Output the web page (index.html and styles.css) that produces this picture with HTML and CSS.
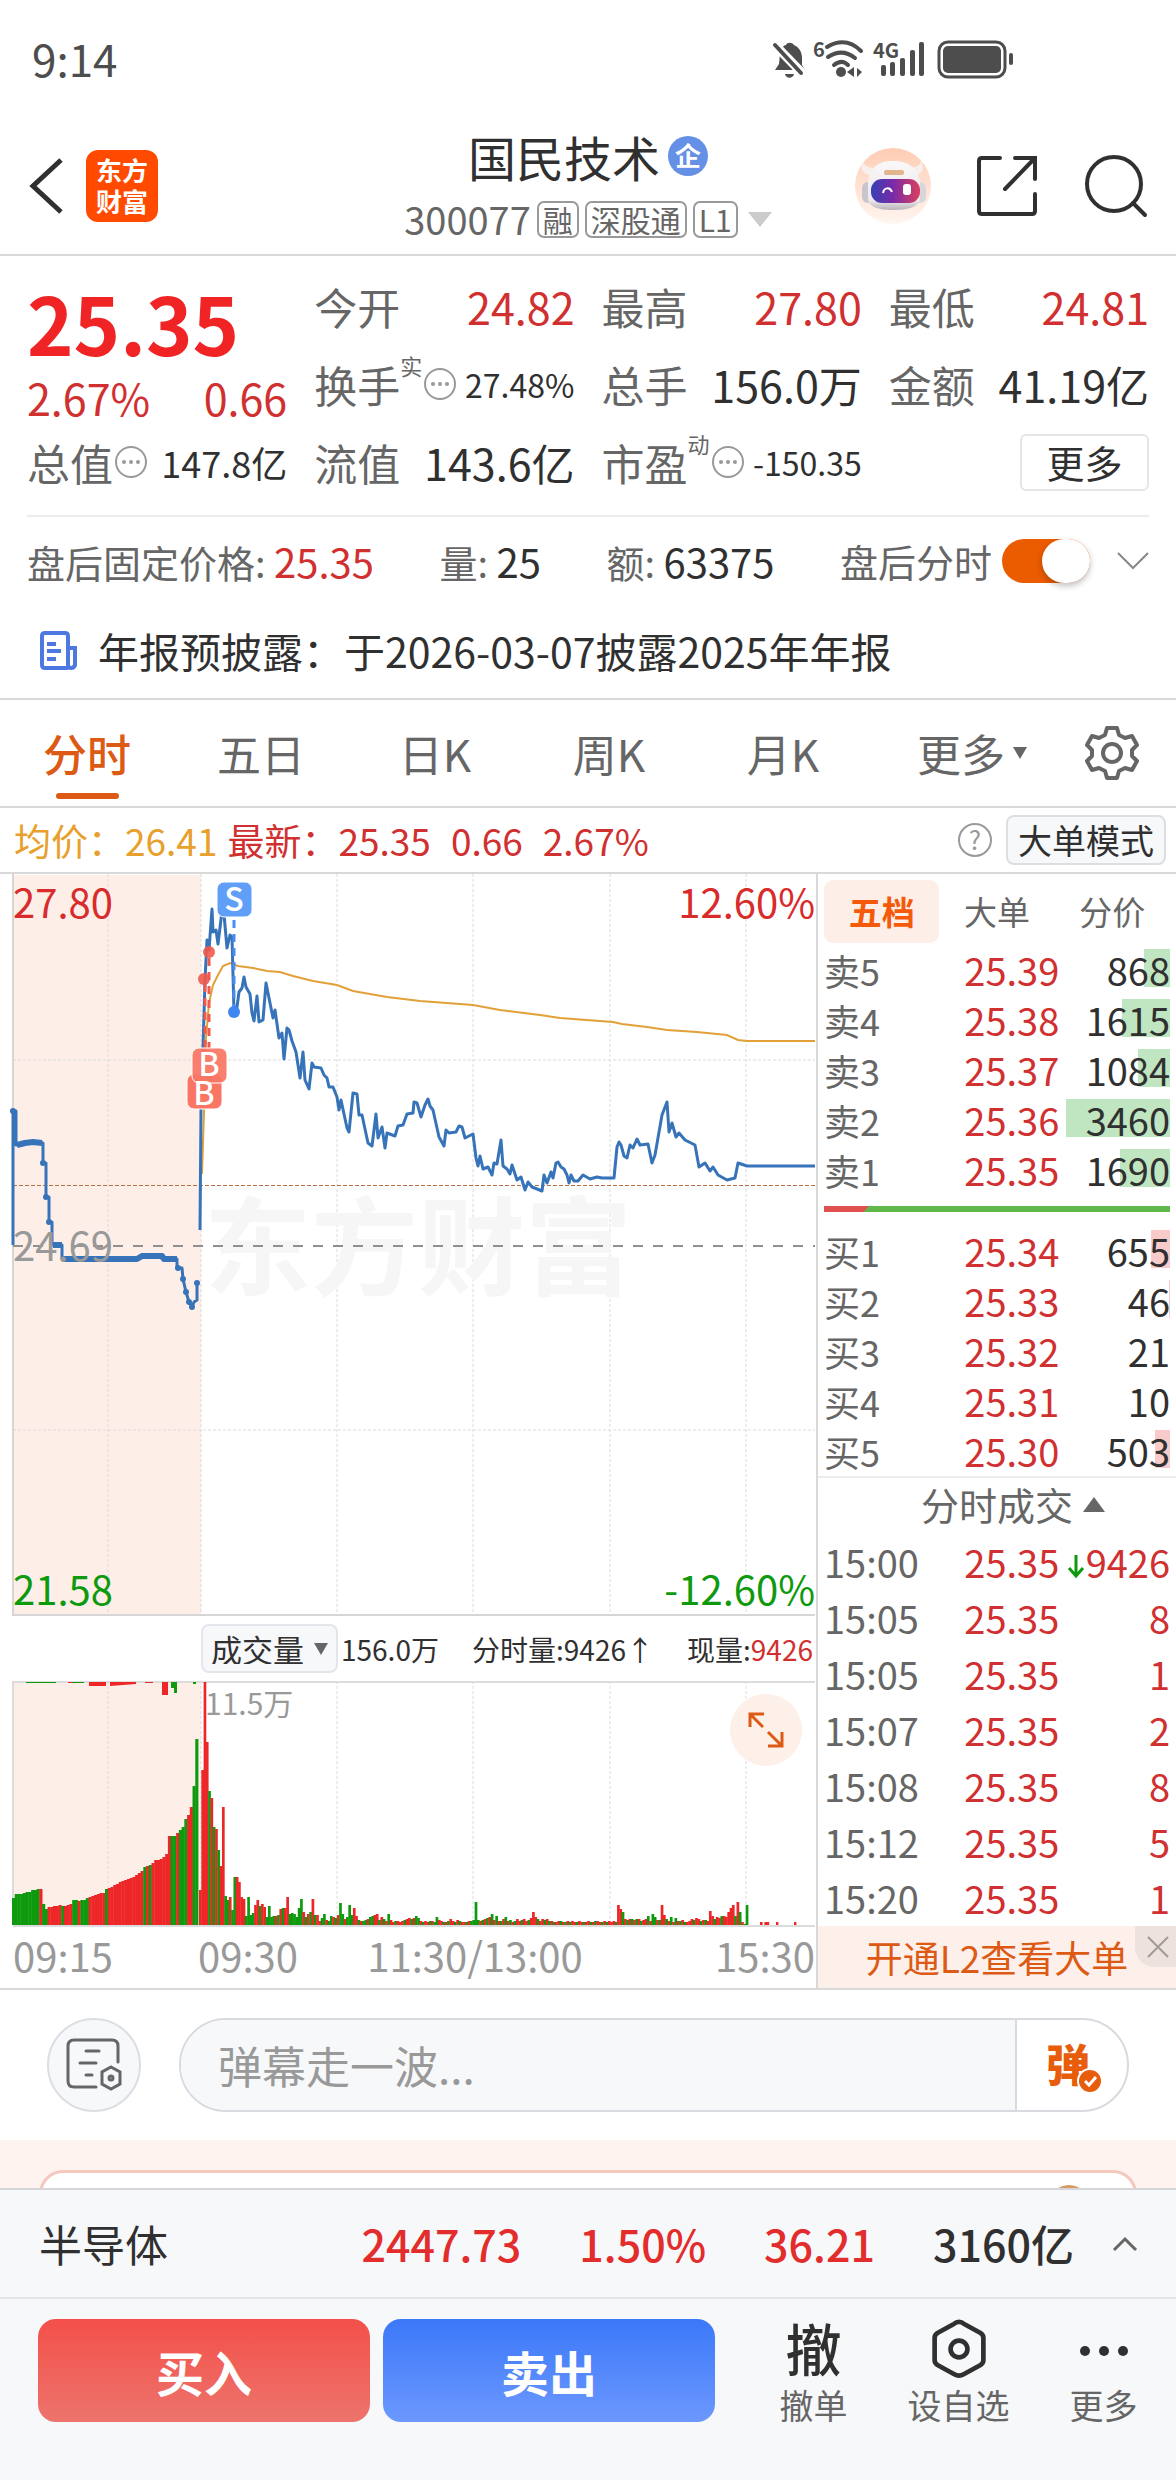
FILE: index.html
```html
<!DOCTYPE html>
<html lang="zh-CN">
<head>
<meta charset="utf-8">
<meta name="viewport" content="width=device-width, initial-scale=1">
<title>国民技术 300077</title>
<link rel="stylesheet" href="styles.css">
</head>
<body>

<div class="statusbar">
	<span class="clock">9:14</span>
	<svg class="status-icons" viewBox="0 -10 246 60" width="246" height="60" aria-hidden="true">
		<g fill="#4d4d4d">
			<path d="M8 13C9 8 12 5 14 5c1-3 6-3 8 0 5 2 8 7 8 13v7l3 5H3l4-6z"/>
			<path d="M13 34h9c-1 5-8 5-9 0z"/>
			<path d="M0 2L32 35" stroke="#fff" stroke-width="9"/>
			<path d="M3 5L29 33" stroke="#4d4d4d" stroke-width="4" stroke-linecap="round"/>
			<text class="tiny" x="41" y="17">6</text>
			<circle cx="69" cy="32" r="5"/>
			<path d="M82 27v10l-7-5zM83 27v10M84 28v9M85 28l5 4-5 5z"/>
			<text class="tiny" x="101" y="18">4G</text>
			<rect x="109" y="25" width="5" height="11" rx="2"/>
			<rect x="118" y="22" width="5" height="14" rx="2"/>
			<rect x="128" y="18" width="5" height="18" rx="2"/>
			<rect x="138" y="10" width="5" height="26" rx="2"/>
			<rect x="147" y="2" width="5" height="34" rx="2"/>
			<rect x="171" y="6" width="58" height="27" rx="5"/>
			<rect x="237" y="13" width="4" height="12" rx="2"/>
		</g>
		<g fill="none" stroke="#4d4d4d" stroke-linecap="round">
			<path stroke-width="4" d="M55 7c12-7 24-6 34 4M56 17c9-6 18-6 27 1M62 25c5-4 10-4 14 0"/>
			<rect stroke-width="3" x="167" y="2" width="66" height="35" rx="9"/>
		</g>
	</svg>
</div>

<header class="header">
	<div class="header-left">
		<button class="icon-btn" aria-label="返回">
			<svg viewBox="0 0 36 60" width="36" height="60"><path d="M33 4L5 30l28 26" fill="none" stroke="#303030" stroke-width="5"/></svg>
		</button>
		<span class="logo">东方<br>财富</span>
	</div>
	<div class="header-title">
		<h1>国民技术<span class="badge">企</span></h1>
		<div class="code">300077 <span class="tag">融</span><span class="tag">深股通</span><span class="tag">L1</span><i class="tri-down big"></i></div>
	</div>
	<div class="header-right">
		<button class="icon-btn" aria-label="助手">
			<svg viewBox="0 0 78 78" width="78" height="78">
				<defs>
					<linearGradient id="halo" x1="0" y1="0" x2="0" y2="1"><stop offset="0" stop-color="#ffccb3"/><stop offset="1" stop-color="#fff6f1"/></linearGradient>
					<linearGradient id="shell" x1="0" y1="0" x2="0" y2="1"><stop offset="0" stop-color="#fbf8f8"/><stop offset=".8" stop-color="#ece8ec"/><stop offset="1" stop-color="#b9b3ba"/></linearGradient>
					<linearGradient id="visor"><stop offset="0" stop-color="#3540b4"/><stop offset=".45" stop-color="#7a2aa8"/><stop offset="1" stop-color="#dc3f5c"/></linearGradient>
				</defs>
				<circle cx="39" cy="39" r="38" fill="url(#halo)"/>
				<path d="M15 28c-8-2-9-8-6-14 1 4 4 6 10 7zM62 28c8-2 8-8 5-14-1 4-4 6-9 7z" fill="#f7eeee"/>
				<rect x="8" y="35" width="12" height="21" rx="6" fill="#c9c5ce"/>
				<rect x="60" y="35" width="12" height="21" rx="6" fill="#d9d5dc"/>
				<path d="M14 38c0-17 10-24 25-24s27 7 27 24v13c0 9-12 12-27 12S14 60 14 51z" fill="url(#shell)"/>
				<rect x="30" y="23" width="20" height="5" rx="2" fill="#e3b58d"/>
				<rect x="17" y="32" width="49" height="24" rx="11" fill="url(#visor)"/>
				<path d="M29 46c1-6 7-6 9-1" fill="none" stroke="#fff" stroke-width="2"/>
				<rect x="49" y="37" width="8" height="11" rx="3" fill="#fff"/>
			</svg>
		</button>
		<button class="icon-btn" aria-label="分享">
			<svg viewBox="0 0 62 62" width="62" height="62"><path d="M24 3H6q-3 0-3 3v50q0 3 3 3h50q3 0 3-3V39M39 3h20v21M58 4L29 34" fill="none" stroke="#303030" stroke-width="4" stroke-linecap="round"/></svg>
		</button>
		<button class="icon-btn" aria-label="搜索">
			<svg viewBox="0 0 64 64" width="64" height="64"><circle cx="30" cy="30" r="27" fill="none" stroke="#303030" stroke-width="4"/><path d="M49 49l12 12" stroke="#303030" stroke-width="4" stroke-linecap="round"/></svg>
		</button>
	</div>
</header>

<section class="quote">
	<div class="stats">
		<div class="price-box">
			<div class="price">25.35</div>
			<div class="change"><span>2.67%</span><span>0.66</span></div>
		</div>
		<div class="stat"><span>今开</span><b class="up">24.82</b></div>
		<div class="stat"><span>最高</span><b class="up">27.80</b></div>
		<div class="stat"><span>最低</span><b class="up">24.81</b></div>
		<div class="stat"><span>换手</span><sup>实</sup><i class="dots"></i><b class="sm">27.48%</b></div>
		<div class="stat"><span>总手</span><b>156.0万</b></div>
		<div class="stat"><span>金额</span><b>41.19亿</b></div>
		<div class="stat"><span>总值</span><i class="dots"></i><b class="md">147.8亿</b></div>
		<div class="stat"><span>流值</span><b>143.6亿</b></div>
		<div class="stat"><span>市盈</span><sup>动</sup><i class="dots"></i><b class="sm">-150.35</b></div>
		<div class="stat end"><button class="more">更多</button></div>
	</div>
	<div class="after">
		<span>盘后固定价格: <b class="up">25.35</b></span>
		<span>量: <b>25</b></span>
		<span>额: <b>63375</b></span>
		<div class="after-right">
			<label class="switch">盘后分时<input type="checkbox" checked></label>
			<svg viewBox="0 0 32 20" width="32" height="20"><path d="M1 2l15 15L31 2" fill="none" stroke="#888" stroke-width="2"/></svg>
		</div>
	</div>
	<a class="notice" href="#">
		<svg viewBox="0 0 38 40" width="38" height="40"><g fill="none" stroke="#4d78e0" stroke-width="4"><path d="M29 37H6q-3 0-3-3V5q0-3 3-3h20q3 0 3 3v29q0 3 3 3t4-3V17h-7M8 13h9M8 20h14M8 28h9"/></g></svg>
		年报预披露：于2026-03-07披露2025年年报
	</a>
</section>

<nav class="tabs">
	<button class="tab active">分时</button>
	<button class="tab">五日</button>
	<button class="tab">日K</button>
	<button class="tab">周K</button>
	<button class="tab">月K</button>
	<button class="tab">更多<i class="tri-down"></i></button>
	<button class="tab" aria-label="设置">
		<svg viewBox="0 0 54 56" width="54" height="56"><g fill="none" stroke="#666" stroke-width="4" stroke-linejoin="round"><path d="M22 3h10l2 7 6 3 7-2 5 9-5 5v6l5 5-5 9-7-2-6 3-2 7H22l-2-7-6-3-7 2-5-9 5-5v-6l-5-5 5-9 7 2 6-3z"/><circle cx="27" cy="28" r="9"/></g></svg>
	</button>
</nav>

<div class="avgbar">
	<span class="avg">均价：26.41</span>
	<span class="up">最新：25.35</span>
	<span class="up">0.66</span>
	<span class="up">2.67%</span>
	<span class="help">?</span>
	<button class="mode">大单模式</button>
</div>

<main class="market">
	<section class="charts">
		<svg class="chart" viewBox="0 0 816 742">
			<rect x="13" y="1" width="188" height="740" fill="#fdeee8"/>
			<g class="grid"><path d="M108 0V741M201 0V741M337 0V741M473 0V741M610 0V741M746 0V741M13 186H815M13 556H815"/></g>
			<path d="M13 0V741H815" fill="none" stroke="#d6d6d6" stroke-width="2"/>
			<text class="watermark" x="204" y="413">东方财富</text>
			<path d="M13 372H815" stroke="#909090" stroke-width="2" stroke-dasharray="10 10"/>
			<path class="ref-line" d="M13 311H815"/>
			<path class="avg-line" d="M202 300L204 238 206 163 209 129 213 111 218 101 223 92 230 89 238 92 253 94 267 97 280 98 293 102 313 107 337 111 353 117 387 123 420 127 473 131 500 136 540 141 560 144 613 148 622 150 647 153 667 156 697 158 727 161 738 166 747 167H815"/>
			<path class="price-line" d="M13 371V237H16V271H20L25 269 33 268 43 269V289H46V323H49V348H52V371H62V385H137L142 381 162 382 163 385H177V394H182L183 405 186 418 189 428 192 433 194 428 197 426V409"/>
			<path class="price-line thick" d="M17 271L25 269 33 268 42 269M53 371H62M63 385H137L142 382H162L164 385H177"/>
			<g fill="#3673b9"><circle cx="13" cy="237" r="3"/><circle cx="43" cy="289" r="3"/><circle cx="46" cy="323" r="3"/><circle cx="49" cy="348" r="3"/><circle cx="178" cy="394" r="3"/><circle cx="183" cy="405" r="3"/><circle cx="186" cy="418" r="3"/><circle cx="189" cy="428" r="3"/><circle cx="192" cy="433" r="3"/><circle cx="197" cy="409" r="3"/></g>
			<path class="price-line" d="M200 356L201 236 203 173 205 106 207 66 209 76 212 35 213 58 216 56 218 70 223 29 227 74 230 61 232 63 234 138 237 133 239 118 242 114 244 103 246 113 250 120 252 139 254 147 257 122 259 148 263 146 266 109 270 129 273 144 275 136 279 164 282 159 284 185 287 154 289 156 292 167 296 178 300 204 303 178 305 206 309 215 312 189 314 193 321 194 324 201 327 204 329 213 333 213 337 223 339 236 341 226 347 254 349 258 353 219 357 220 359 241 362 241 368 269 372 272 376 240 378 264 382 253 385 274 387 259 395 262 398 252 403 251 407 240 413 239 414 228 417 229 421 243 425 231 428 225 430 232 433 236 439 263 444 272 446 256 449 259 456 258 459 252 462 253 465 264 473 260 476 284 478 292 480 282 483 295 488 293 492 301 494 289 497 290 501 266 503 292 507 295 510 300 512 291 517 306 521 303 525 316 528 308 532 313 542 317 544 301 547 309 551 298 553 304 556 289 558 288 561 293 564 295 567 301 569 309 571 301 574 307 578 307 583 301 590 305 597 303 602 304 614 304 617 273 619 268 621 271 624 282 627 284 630 271 633 274 637 265 640 271 648 270 652 289 655 281 662 241 667 228 669 258 672 249 676 263 679 259 685 266 695 271 699 293 705 289 710 297 713 293 718 301 727 306 735 304 738 289 747 292H815"/>
			<g fill="none" stroke-width="3" stroke-dasharray="8 6"><path d="M209 84V174M205 110V174" stroke="#f0594c"/><path d="M234 46V138" stroke="#4a8df0"/></g>
			<g fill="#f0594c" fill-opacity=".9"><circle cx="209" cy="78" r="6"/><circle cx="204" cy="105" r="6"/></g>
			<circle cx="234" cy="138" r="6" fill="#3f86f0"/>
			<g stroke="#fff" stroke-width="1">
				<rect x="187" y="200" width="35" height="35" rx="7" fill="#f97564"/>
				<rect x="192" y="174" width="35" height="35" rx="7" fill="#f97564" fill-opacity=".93"/>
				<rect x="217" y="8" width="35" height="35" rx="7" fill="#5f9ff8"/>
			</g>
			<g class="mark"><text x="204" y="231">B</text><text x="209" y="202">B</text><text x="234" y="37">S</text></g>
			<text class="t red" x="13" y="44">27.80</text>
			<text class="t red end" x="815" y="44">12.60%</text>
			<text class="t gray" x="13" y="387">24.69</text>
			<text class="t green" x="13" y="731">21.58</text>
			<text class="t green end" x="815" y="731">-12.60%</text>
		</svg>
		<div class="volbar">
			<span class="pick"><select aria-label="指标"><option>成交量</option></select><i class="tri-down"></i></span>
			<span>156.0万</span>
			<span class="gap">分时量:9426↑</span>
			<span class="gap">现量:<b class="up">9426</b></span>
		</div>
		<svg class="chart" viewBox="0 0 816 307">
			<rect x="13" y="1" width="188" height="243" fill="#fdeee8"/>
			<g class="grid"><path d="M108 0V244M201 0V244M337 0V244M473 0V244M610 0V244M746 0V244"/></g>
			<path d="M13 244V1H815M13 245H815" fill="none" stroke="#dcdcdc" stroke-width="2"/>
			<g id="bars"></g>
			<path d="M50 1h5v1h-5zM68 1h6v1h-6zM89 1h17v4h-17zM110 1h26v2l-26 2zM162 1h6v13h-6zM145 1h8v1h-8z" fill="#ed2728"/>
			<path d="M26 1h30v1H26zM171 1h6v11h-3V7h-3zM193 1h3v2h-3zM72 1h12v1H72z" fill="#0e9a0e"/>
			<text class="t small" x="205" y="34">11.5万</text>
			<circle cx="766" cy="49" r="36" fill="#fdf0e8"/>
			<path d="M763 46L750 33M750 46V33H764M768 51l14 14M782 51V65H768" fill="none" stroke="#dc5a14" stroke-width="3"/>
			<text class="t gray" x="13" y="291">09:15</text>
			<text class="t gray" x="198" y="291">09:30</text>
			<text class="t gray mid" x="475" y="291">11:30/13:00</text>
			<text class="t gray end" x="815" y="291">15:30</text>
		</svg>
	</section>

	<aside class="book">
		<div class="book-tabs">
			<button class="active">五档</button><button>大单</button><button>分价</button>
		</div>
		<table class="levels sell">
			<tr><th>卖5</th><td>25.39</td><td><i style="width:26px"></i><b>868</b></td></tr>
			<tr><th>卖4</th><td>25.38</td><td><i style="width:48px"></i><b>1615</b></td></tr>
			<tr><th>卖3</th><td>25.37</td><td><i style="width:32px"></i><b>1084</b></td></tr>
			<tr><th>卖2</th><td>25.36</td><td><i style="width:104px"></i><b>3460</b></td></tr>
			<tr><th>卖1</th><td>25.35</td><td><i style="width:50px"></i><b>1690</b></td></tr>
		</table>
		<div class="ratio"><i style="width:13%"></i></div>
		<table class="levels buy">
			<tr><th>买1</th><td>25.34</td><td><i style="width:19px"></i><b>655</b></td></tr>
			<tr><th>买2</th><td>25.33</td><td><i style="width:1px"></i><b>46</b></td></tr>
			<tr><th>买3</th><td>25.32</td><td><b>21</b></td></tr>
			<tr><th>买4</th><td>25.31</td><td><b>10</b></td></tr>
			<tr><th>买5</th><td>25.30</td><td><i style="width:15px"></i><b>503</b></td></tr>
		</table>
		<button class="deals-title">分时成交<i class="tri-up"></i></button>
		<table class="deals">
			<tr><th>15:00</th><td>25.35</td><td><svg viewBox="0 0 16 24" width="16" height="24"><path d="M8 1v20M1 14l7 8 7-8" fill="none" stroke="#0e9a0e" stroke-width="3"/></svg>9426</td></tr>
			<tr><th>15:05</th><td>25.35</td><td>8</td></tr>
			<tr><th>15:05</th><td>25.35</td><td>1</td></tr>
			<tr><th>15:07</th><td>25.35</td><td>2</td></tr>
			<tr><th>15:08</th><td>25.35</td><td>8</td></tr>
			<tr><th>15:12</th><td>25.35</td><td>5</td></tr>
			<tr><th>15:20</th><td>25.35</td><td>1</td></tr>
		</table>
		<div class="promo">
			<a href="#">开通L2查看大单</a>
			<button aria-label="关闭"><svg viewBox="0 0 22 22" width="22" height="22"><path d="M1 1l20 20M21 1L1 21" stroke="#a39a96" stroke-width="2"/></svg></button>
		</div>
	</aside>
</main>

<div class="danmu">
	<button class="round" aria-label="弹幕设置">
		<svg viewBox="0 0 58 54" width="58" height="54"><g fill="none" stroke="#666" stroke-width="3" stroke-linecap="round"><path d="M31 49H9q-6 0-6-6V8q0-6 6-6h38q6 0 6 6v16"/><path d="M21 13h13M15 25h16M21 37h6"/><path d="M46 29l9 5v12l-9 5-9-5V34z"/><circle cx="46" cy="40" r="2"/></g></svg>
	</button>
	<div class="danmu-box">
		<input type="text" placeholder="弹幕走一波..." aria-label="弹幕">
		<button class="send">弹<svg viewBox="0 0 26 26" width="26" height="26"><circle cx="13" cy="13" r="12" fill="#e85d0c" stroke="#fff" stroke-width="2"/><path d="M8 13l4 4 7-8" fill="none" stroke="#fff" stroke-width="3"/></svg></button>
	</div>
</div>

<div class="feed"><div class="card"><i></i></div></div>

<footer class="footer">
	<div class="index">
		<span class="name">半导体</span>
		<b class="up">2447.73</b><b class="up">1.50%</b><b class="up">36.21</b><b>3160亿</b>
		<svg viewBox="0 0 24 14" width="24" height="14"><path d="M1 13L12 2l11 11" fill="none" stroke="#666" stroke-width="3"/></svg>
	</div>
	<div class="actions">
		<button class="trade buy-btn">买入</button>
		<button class="trade sell-btn">卖出</button>
		<button class="tool"><span class="big-char">撤</span>撤单</button>
		<button class="tool">
			<svg viewBox="0 0 60 64" width="60" height="60"><g fill="none" stroke="#303030" stroke-width="5" stroke-linejoin="round"><path d="M30 3q3 0 5 2l18 10q3 2 3 5v24q0 3-3 5L35 59q-5 3-10 0L7 49q-3-2-3-5V20q0-3 3-5L25 5q2-2 5-2z"/><circle cx="30" cy="32" r="9"/></g></svg>设自选
		</button>
		<button class="tool">
			<svg viewBox="0 0 60 60" width="60" height="60"><g fill="#303030"><circle cx="11" cy="32" r="5"/><circle cx="30" cy="32" r="5"/><circle cx="49" cy="32" r="5"/></g></svg>更多
		</button>
	</div>
</footer>

<script src="chart.js"></script>
</body>
</html>
```
FILE: styles.css
```css
* {
	box-sizing: border-box;
}
body {
	margin: 0;
	background: #fff;
	color: #303030;
	font-family: "Noto Sans CJK SC", "Noto Sans", sans-serif;
	font-size: 44px;
	line-height: 1;
}
button, input, select {
	font-family: inherit;
	font-size: inherit;
	line-height: inherit;
	color: inherit;
	background: none;
	border: 0;
	padding: 0;
	margin: 0;
}
svg {
	display: block;
	flex: none;
	overflow: visible;
}
b, i {
	font-weight: normal;
	font-style: normal;
}
a {
	color: inherit;
	text-decoration: none;
}
.up {
	color: #d13030;
}

/* status bar + header */
.statusbar {
	display: flex;
	justify-content: space-between;
	align-items: center;
	height: 120px;
	padding: 0 158px 4px 32px;
	color: #4d4d4d;
}
.status-icons {
	margin-top: 4px;
}
.tiny {
	font: 700 20px "Noto Sans CJK SC", sans-serif;
}
.header {
	display: grid;
	grid-template-columns: 1fr auto 1fr;
	align-items: center;
	height: 136px;
	border-bottom: 2px solid #d9d9d9;
}
.header-left, .header-right {
	display: flex;
	align-items: center;
	padding-bottom: 2px;
}
.header-left {
	gap: 22px;
	padding-left: 28px;
}
.header-right {
	justify-content: flex-end;
	gap: 44px;
	padding-right: 28px;
}
.header-right .icon-btn + .icon-btn + .icon-btn {
	margin-left: 2px;
}
.logo {
	width: 72px;
	height: 72px;
	padding: 4px 0;
	border-radius: 12px;
	background: #ff4a00;
	color: #fff;
	font-size: 26px;
	font-weight: 700;
	line-height: 31px;
	text-align: center;
}
.header-title h1 {
	display: flex;
	justify-content: center;
	align-items: center;
	gap: 8px;
	margin: 0;
	padding-bottom: 6px;
	font-size: 48px;
	font-weight: 400;
	line-height: 58px;
}
.badge {
	width: 40px;
	height: 40px;
	border-radius: 50%;
	background: #6490e6;
	color: #fff;
	font-size: 26px;
	font-weight: 700;
	line-height: 38px;
	text-align: center;
}
.code {
	display: flex;
	align-items: center;
	gap: 6px;
	height: 56px;
	color: #666;
	font-size: 38px;
}
.tag {
	padding: 0 4px;
	border: 2px solid #999;
	border-radius: 7px;
	font-size: 30px;
	line-height: 33px;
}
.tri-down, .tri-up {
	display: inline-block;
	border: 7px solid transparent;
	border-top: 12px solid #666;
	border-bottom: 0;
}
.tri-down.big {
	margin-left: 4px;
	border-width: 15px 12px 0;
	border-top-color: #ccc;
}
.tri-up {
	border-width: 0 11px 15px;
	border-bottom: 15px solid #666;
}

/* quote */
.quote {
	padding: 11px 27px 0;
	border-bottom: 2px solid #d9d9d9;
}
.stats {
	display: grid;
	grid-template-columns: repeat(4, 1fr);
	grid-auto-rows: 78px;
	column-gap: 27px;
	padding-bottom: 14px;
	border-bottom: 2px solid #ececec;
}
.price-box {
	grid-row: span 2;
	color: #d13030;
}
.price {
	padding-top: 10px;
	color: #f02424;
	font-size: 79px;
	font-weight: 700;
	line-height: 90px;
}
.change {
	display: flex;
	justify-content: space-between;
	font-size: 43px;
	line-height: 60px;
}
.stat {
	display: flex;
	align-items: center;
	color: #666;
	font-size: 43px;
	white-space: nowrap;
}
.stat b {
	margin-left: auto;
	color: #303030;
}
.stat b.up {
	color: #d13030;
}
.stat .sm {
	font-size: 32px;
}
.stat .md {
	font-size: 36px;
}
.stat sup {
	align-self: flex-start;
	margin-top: 8px;
	font-size: 22px;
	line-height: 24px;
}
.dots {
	position: relative;
	width: 32px;
	height: 32px;
	margin-left: 2px;
	border: 2px solid #999;
	border-radius: 50%;
}
.dots::after {
	content: "";
	position: absolute;
	left: 12px;
	top: 12px;
	width: 4px;
	height: 4px;
	border-radius: 50%;
	background: #999;
	box-shadow: -7px 0 #999, 7px 0 #999;
}
.stat.end {
	justify-content: flex-end;
}
.more {
	width: 129px;
	height: 57px;
	border: 2px solid #e6e6e6;
	border-radius: 6px;
	color: #303030;
	font-size: 38px;
}
.after {
	display: flex;
	align-items: center;
	justify-content: space-between;
	height: 88px;
	color: #666;
	font-size: 38px;
}
.after b {
	color: #303030;
	font-size: 40px;
}
.after .up {
	color: #d13030;
}
.after-right {
	display: flex;
	align-items: center;
	gap: 27px;
}
.switch {
	display: flex;
	align-items: center;
	gap: 10px;
}
.switch input {
	appearance: none;
	width: 88px;
	height: 44px;
	border-radius: 22px;
	background: #eb5b00;
}
.switch input::after {
	content: "";
	display: block;
	width: 48px;
	height: 44px;
	margin-left: auto;
	border-radius: 22px;
	background: #fff;
	box-shadow: 0 3px 6px rgba(0, 0, 0, .25);
}
.notice {
	display: flex;
	align-items: center;
	gap: 21px;
	height: 93px;
	padding: 0 0 2px 12px;
	font-size: 41px;
}

/* period tabs */
.tabs {
	display: grid;
	grid-template-columns: repeat(5, 174fr) 204fr 76fr;
	height: 108px;
	padding-right: 26px;
	border-bottom: 2px solid #d9d9d9;
	color: #666;
}
.tab {
	position: relative;
	display: flex;
	align-items: center;
	justify-content: center;
	gap: 8px;
}
.tab.active {
	color: #dc5a14;
	font-weight: 500;
}
.tab.active::after {
	content: "";
	position: absolute;
	bottom: 7px;
	width: 63px;
	height: 6px;
	border-radius: 3px;
	background: #dc5a14;
}
.avgbar {
	display: flex;
	align-items: center;
	gap: 20px;
	height: 66px;
	padding: 0 10px 0 14px;
	border-bottom: 2px solid #d9d9d9;
	font-size: 37px;
}
.avg {
	margin-right: -10px;
	color: #e8a02c;
}
.help {
	width: 34px;
	height: 34px;
	margin-left: auto;
	margin-right: -6px;
	border: 2px solid #999;
	border-radius: 50%;
	color: #999;
	font-size: 26px;
	line-height: 28px;
	text-align: center;
}
.mode {
	height: 50px;
	padding: 0 10px;
	border: 2px solid #dcdee4;
	border-radius: 8px;
	background: #f7f8fa;
	font-size: 34px;
}

/* charts */
.market {
	display: grid;
	grid-template-columns: 818fr 358fr;
	border-bottom: 2px solid #d9d9d9;
}
.charts {
	border-right: 2px solid #d9d9d9;
}
.chart {
	width: 100%;
}
.grid path {
	stroke: #dcdcdc;
	stroke-width: 1;
	stroke-dasharray: 3 2;
}
.ref-line {
	stroke: #b5714a;
	stroke-width: 1;
	stroke-dasharray: 4 2;
	shape-rendering: crispEdges;
}
.price-line {
	fill: none;
	stroke: #3673b9;
	stroke-width: 3;
	stroke-linejoin: round;
}
.price-line.thick {
	stroke-width: 6;
}
.avg-line {
	fill: none;
	stroke: #e2a138;
	stroke-width: 2;
}
.watermark {
	fill: #f6f6f6;
	font-size: 107px;
	font-weight: 700;
}
.mark text {
	fill: #fff;
	font-size: 32px;
	font-weight: 500;
	text-anchor: middle;
}
.t {
	font-size: 40px;
}
.t.red { fill: #d92b2b; }
.t.gray { fill: #999; }
.t.green { fill: #0e9a0e; }
.t.end { text-anchor: end; }
.t.mid { text-anchor: middle; }
.t.small {
	fill: #999;
	font-size: 30px;
}
.volbar {
	display: flex;
	align-items: center;
	height: 65px;
	padding: 0 3px 0 201px;
	font-size: 28px;
	white-space: nowrap;
}
.pick {
	display: flex;
	align-items: center;
	height: 49px;
	margin-right: 3px;
	padding: 0 8px 0 8px;
	gap: 8px;
	border: 2px solid #e4e6ec;
	border-radius: 8px;
	background: #f7f8fa;
}
.pick select {
	appearance: none;
	width: 95px;
	font-size: 31px;
}
.gap {
	margin-left: auto;
}

/* order book */
.book {
	display: flex;
	flex-direction: column;
	font-size: 38px;
}
.book-tabs {
	display: grid;
	grid-template-columns: repeat(3, 1fr);
	height: 71px;
	padding: 6px 6px 2px;
	color: #666;
	font-size: 33px;
}
.book-tabs .active {
	border-radius: 9px;
	background: #fdeee8;
	color: #f55a0a;
	font-weight: 700;
}
.levels, .deals {
	width: calc(100% - 12px);
	margin: 0 6px;
	border-collapse: collapse;
	table-layout: fixed;
}
.levels th, .deals th {
	width: 36%;
	padding: 0;
	color: #666;
	font-weight: 400;
	text-align: left;
}
.levels th {
	font-size: 36px;
}
.levels td, .deals td {
	padding: 0;
	color: #d13030;
	text-align: right;
}
.levels td:nth-child(2), .deals td:nth-child(2) {
	width: 32%;
}
.levels tr {
	height: 50px;
}
.levels td:last-child {
	position: relative;
	color: #303030;
}
.levels i {
	position: absolute;
	right: 0;
	top: 4px;
	height: 38px;
	background: #bfe6c0;
}
.levels.buy i {
	background: #f8caca;
}
.levels b {
	position: relative;
}
.ratio {
	height: 6px;
	margin: 11px 6px 14px;
	background: #60b84c;
}
.ratio i {
	display: block;
	height: 6px;
	background: #e0504f;
	clip-path: polygon(0 0, 100% 0, 88% 100%, 0 100%);
}
.deals-title {
	display: flex;
	align-items: center;
	justify-content: center;
	gap: 10px;
	height: 58px;
	padding: 0 0 4px 32px;
	border-top: 2px solid #ececec;
	color: #666;
}
.deals tr {
	height: 56px;
}
.deals td svg {
	display: inline-block;
	margin-right: 2px;
}
.promo {
	position: relative;
	flex: 1;
	display: flex;
	align-items: center;
	justify-content: center;
	background: #fdf0ea;
	color: #dc5a14;
	font-size: 37px;
}
.promo button {
	position: absolute;
	top: 0;
	right: 0;
	width: 41px;
	height: 41px;
	padding-left: 12px;
	border-bottom-left-radius: 20px;
	background: #ede2dd;
}

/* danmu */
.danmu {
	display: flex;
	gap: 38px;
	padding: 28px 47px;
}
.round {
	display: flex;
	align-items: center;
	justify-content: center;
	flex: none;
	width: 94px;
	height: 94px;
	border: 2px solid #dcdee4;
	border-radius: 50%;
	background: #f7f8fa;
}
.danmu-box {
	display: flex;
	flex: 1;
	height: 94px;
	border: 2px solid #d8dae0;
	border-radius: 47px;
	overflow: hidden;
}
.danmu-box input {
	flex: 1;
	min-width: 0;
	padding-left: 37px;
	background: #f7f8fa;
}
.danmu-box input::placeholder {
	color: #999;
}
.send {
	position: relative;
	width: 112px;
	padding: 0 8px 4px 0;
	border-left: 2px solid #d8dae0;
	color: #e85d0c;
	font-weight: 900;
}
.send svg {
	position: absolute;
	right: 24px;
	bottom: 16px;
}
.feed {
	height: 48px;
	padding: 30px 39px 0;
	overflow: hidden;
	background: #fff3ef;
}
.card {
	height: 80px;
	border: 3px solid #f5c8bd;
	border-radius: 24px;
	background: #fff;
}
.card i {
	display: block;
	width: 40px;
	height: 40px;
	margin: 12px 45px 0 auto;
	border-radius: 50%;
	background: #d69a62;
}

/* footer */
.footer {
	border-top: 2px solid #d4d6da;
	background: #f7f8fa;
}
.index {
	display: flex;
	align-items: center;
	gap: 58px;
	height: 109px;
	padding: 0 39px;
	border-bottom: 2px solid #e4e5e8;
	font-size: 43px;
}
.index .name {
	margin-right: auto;
}
.index svg {
	margin-left: -19px;
}
.index b {
	font-weight: 500;
}
.index .up {
	color: #e32c2c;
}
.actions {
	display: flex;
	padding: 20px 0 58px 38px;
}
.trade {
	flex: 332;
	height: 103px;
	margin-right: 13px;
	border-radius: 18px;
	color: #fff;
	font-size: 48px;
	font-weight: 700;
}
.buy-btn {
	background: linear-gradient(#f4504a, #ec746c);
}
.sell-btn {
	margin-right: 26px;
	background: linear-gradient(#3b78f8, #6c98ff);
}
.tool {
	display: flex;
	flex: 145;
	flex-direction: column;
	align-items: center;
	justify-content: space-between;
	color: #666;
	font-size: 34px;
	white-space: nowrap;
}
.big-char {
	color: #303030;
	font-size: 56px;
	font-weight: 500;
}
```
FILE: chart.js
```js
// volume bars: positive = red, negative = green
var pre = [-27,-31,-31,-31,-32,-33,-33,-35,-35,-36,36,-21,-16,18,18,19,19,20,-19,19,20,21,-25,-25,24,-25,-25,-27,28,29,30,31,32,32,-36,37,38,40,41,43,44,45,46,47,48,50,52,54,-58,59,-60,62,65,65,66,68,71,89,-89,-89,92,-95,-98,-106,110,118,-139,-186];
var day = [35,155,243,183,-134,127,-98,96,-75,59,118,-29,-25,28,-15,-48,48,43,28,26,-9,-28,-10,-12,20,25,-19,21,18,-8,-19,-8,-9,9,-10,16,-17,17,28,-11,-12,-11,-8,-17,-26,13,-8,11,-13,26,-10,10,4,-7,-11,5,-4,-9,8,-7,
	10,-22,-11,6,-8,-20,-10,17,9,-5,4,-4,-5,6,-8,-9,10,11,-5,8,-6,4,-11,5,3,-4,4,3,4,-5,6,7,-6,7,-9,-7,4,-3,4,3,
	-4,4,-3,-8,5,4,-3,3,-4,6,4,-3,5,-4,3,3,-3,4,-4,-5,-23,-5,4,-5,6,-7,8,-11,5,-9,4,-4,6,-8,4,-5,3,-4,6,4,
	-5,6,4,-5,7,13,8,-6,4,6,-5,6,-4,4,-3,3,4,-4,3,-3,4,-3,4,3,-3,4,3,-3,3,4,-3,3,-4,4,3,-3,4,-3,4,3,
	4,-3,20,16,-13,6,-5,6,-6,5,-6,6,-4,5,6,-9,4,-11,-8,5,-5,20,10,-6,4,-8,3,-7,4,-4,5,-3,3,4,6,-5,7,6,-4,5,
	-5,4,14,9,-6,8,7,-9,9,8,13,17,20,-9,23,-13,3,-1,-20];

function draw(list, x, step) {
	var g = document.getElementById('bars');
	// a little overlap so neighbouring bars leave no seam
	var w = step + 0.4;
	for (var i = 0; i < list.length; i++) {
		var h = Math.abs(list[i]);
		var r = document.createElementNS('http://www.w3.org/2000/svg', 'rect');
		r.setAttribute('x', x + i * step);
		r.setAttribute('y', 244 - h);
		r.setAttribute('width', w);
		r.setAttribute('height', h);
		r.setAttribute('fill', list[i] > 0 ? '#ed2728' : '#0e9a0e');
		g.appendChild(r);
	}
}

draw(pre, 12, 186 / pre.length);
draw(day, 199, 549 / day.length);
draw([3, 0, 3, 3], 760, 2.2);
draw([3], 776, 2);
draw([3], 794, 2);
```
